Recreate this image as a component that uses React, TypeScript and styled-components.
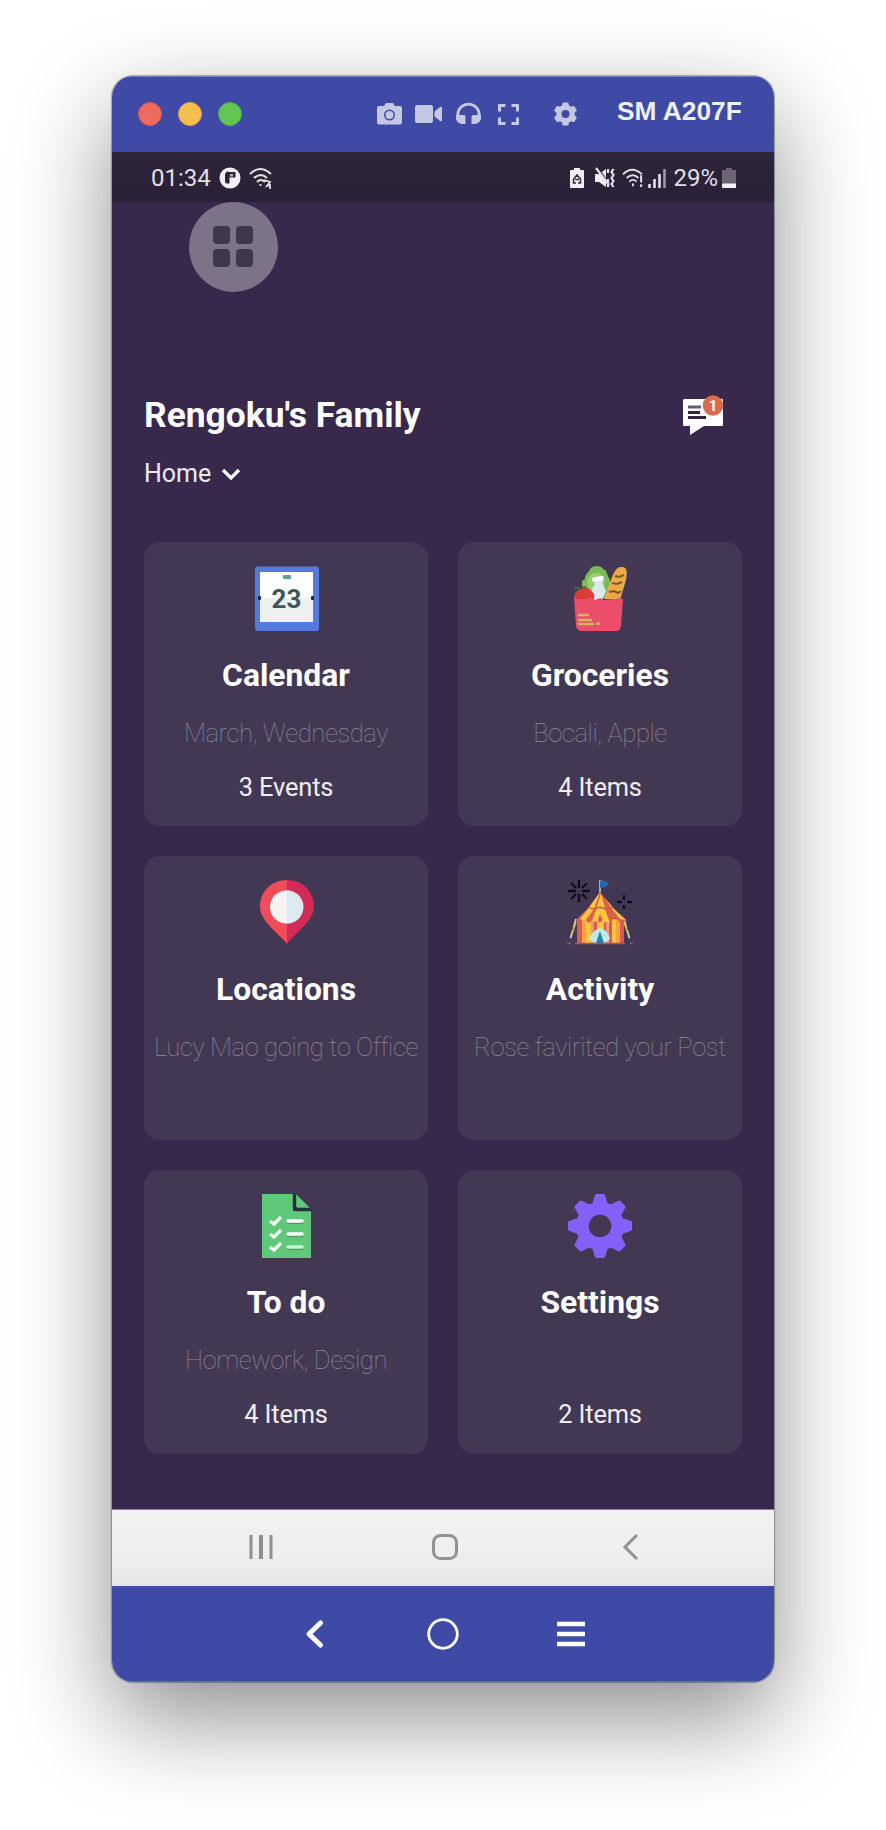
import React from 'react';
import styled, { createGlobalStyle } from 'styled-components';

const Global = createGlobalStyle`
  * { box-sizing: border-box; }
  body { margin: 0; background: #fff; overflow: hidden; }
  svg { display: block; flex: none; overflow: visible; }
`;

const Desktop = styled.main`
  width: 886px;
  height: 1830px;
  padding: 76px 0 0 112px;
  overflow: hidden;
  background: #fff;
  font-family: Roboto, "Liberation Sans", sans-serif;
`;

const Window = styled.section`
  width: 662px;
  height: 1606px;
  border-radius: 21px;
  overflow: hidden;
  display: flex;
  flex-direction: column;
  box-shadow: 0 0 1px 1px rgba(0, 0, 0, 0.3), 0 36px 96px rgba(0, 0, 0, 0.45);
`;

const TitleBar = styled.header`
  height: 76px;
  background: #3e4aa5;
  border-top: 1px solid #7580bd;
  display: flex;
  align-items: center;
  padding: 0 32px 1px 26px;
`;

const Lights = styled.div`
  display: flex;
  gap: 16px;
  margin-right: 135px;
`;

const Light = styled.span<{ $fill: string; $edge: string }>`
  width: 24px;
  height: 24px;
  border-radius: 50%;
  background: ${(p) => p.$fill};
  border: 1px solid ${(p) => p.$edge};
`;

const Tools = styled.div`
  display: flex;
  align-items: center;
  color: #c4c8e2;
`;

const Tool = styled.svg<{ $gap: number }>`
  margin-right: ${(p) => p.$gap}px;
  fill: currentColor;
`;

const DeviceName = styled.h1`
  margin: -6px 0 0;
  font: 700 26.3px/32px "Liberation Sans", Arial, sans-serif;
  color: #eeeff8;
  white-space: nowrap;
`;

const StatusBar = styled.div`
  height: 50px;
  background: linear-gradient(#2e253a, #2a2037);
  display: flex;
  align-items: center;
  padding: 1px 38px 0 39px;
  color: #e2dfe6;
`;

const StatusText = styled.span`
  font-size: 24px;
  line-height: 28px;
  white-space: nowrap;
`;

const StatusLeft = styled.div`
  display: flex;
  align-items: center;
  gap: 8px;
  flex: 1;
`;

const StatusRight = styled.div`
  display: flex;
  align-items: center;
`;

const Screen = styled.div`
  flex: 1;
  background: #38284c;
  padding: 0 32px;
  display: flex;
  flex-direction: column;
`;

const Floating = styled.button`
  margin: 0 0 0 45px;
  padding: 0 2px 1px 0;
  border: 0;
  width: 89px;
  height: 90px;
  border-radius: 50%;
  background: #7d7388;
  display: grid;
  grid-template-columns: 17px 17px;
  grid-template-rows: 18px 18px;
  gap: 5px 6px;
  place-content: center;
`;

const Dot = styled.i`
  background: #3f374c;
  border-radius: 4px;
`;

const Heading = styled.div`
  display: flex;
  justify-content: space-between;
  margin-top: 102px;
  height: 58px;
  padding-right: 18px;
`;

const Family = styled.h2`
  margin: 0;
  color: #fff;
  font-size: 35.4px;
  font-weight: 700;
  line-height: 43px;
  white-space: nowrap;
`;

const HomeRow = styled.div`
  display: flex;
  align-items: center;
  gap: 10px;
  height: 40px;
  padding-top: 4px;
  margin-bottom: 50px;
  color: #ece9ef;
  font-size: 25px;
  line-height: 38px;
`;

const Cards = styled.div`
  display: grid;
  grid-template-columns: 284px 284px;
  grid-auto-rows: 284px;
  gap: 30px;
`;

const Card = styled.article`
  background: #433853;
  border-radius: 16px;
  padding-top: 24px;
  display: flex;
  flex-direction: column;
  align-items: center;
  white-space: nowrap;

  &:nth-child(odd) > svg {
    margin-left: 2px;
  }

  /* The last row sits one pixel tighter under its icons. */
  &:nth-child(n + 5) > h3 {
    margin-top: 23px;
  }
`;

const CardTitle = styled.h3`
  margin: 24px 0 0;
  height: 40px;
  line-height: 39px;
  font-size: 31.8px;
  font-weight: 700;
  color: #fff;
`;

const CardNote = styled.p`
  margin: 19px 0 0;
  height: 36px;
  line-height: 36px;
  font-size: 25.6px;
  letter-spacing: -0.4px;
  font-weight: 100;
  color: #8e8793;
`;

const CardCount = styled.p`
  margin: 18px 0 0;
  height: 36px;
  line-height: 37px;
  font-size: 25.4px;
  letter-spacing: -0.15px;
  color: #f0eef2;
`;

const NavBar = styled.nav`
  height: 77px;
  border-top: 1px solid #8b7d9c;
  background: linear-gradient(#f4effa 0, #f0f2ef 3px, #ecefeb 50px, #e3e6e2 100%);
  display: flex;
  align-items: center;
  padding: 0 136px 2px 137px;
`;

const Controls = styled.footer`
  height: 96px;
  background: #3e4aa5;
  border-bottom: 1px solid #606bb5;
  display: flex;
  align-items: center;
  padding: 0 189px 0 193px;
`;

const Spaced = styled.svg<{ $before: number }>`
  margin-left: ${(p) => p.$before}px;
`;

const teeth = (n: number, r1: number, r2: number, a: number, b: number) => {
  const out: string[] = [];
  for (let i = 0; i < n; i++) {
    const c = (i / n) * Math.PI * 2 - Math.PI / 2;
    [[r1, -b], [r2, -a], [r2, a], [r1, b]].forEach(([r, o]) => {
      out.push(`${(Math.cos(c + o) * r).toFixed(2)},${(Math.sin(c + o) * r).toFixed(2)}`);
    });
  }
  return out.join(' ');
};

const CalendarIcon = () => (
  <svg width="66" height="66" viewBox="0 0 66 66">
    <rect x="1" y="0.500" width="64" height="64.500" rx="3" fill="#5479df" />
    <path d="M6 6h53v26H6z" fill="#fff" />
    <path d="M6 32h53v24H6z" fill="#eff1f1" />
    <rect x="29" y="9" width="8" height="4" rx="1" fill="#55a69a" />
    <rect x="4" y="30" width="3" height="4" rx="1" fill="#1d2938" />
    <rect x="57" y="30" width="3" height="4" rx="1" fill="#1d2938" />
    <text x="32.500" y="42" textAnchor="middle" fontFamily="Roboto" fontSize="26" fontWeight="700" fill="#40555c">23</text>
  </svg>
);

const GroceriesIcon = () => (
  <svg width="66" height="66" viewBox="0 0 66 66">
    <path d="M15 32V15l3-2c0-6 4-6 5-10 3-4 11-4 13 0 4 1 4 6 6 9 3 5 1 12 0 20z" fill="#79bb55" />
    <path d="M20 17c0-7 6-11 12-10 5 2 7 7 5 13L25 31z" fill="#9acc70" />
    <path d="M37 33l7-19c2-6 5-14 11-13 6 0 5 7 4 13L53 34z" fill="#eca948" />
    <path d="M48 10l4 1 5-2M45 17l5 1 5-2M42 26l5-1 4 2 3-2" stroke="#80572d" strokeWidth="2" fill="none" />
    <path d="M25 14q-1-3 3-3l8-1q2 3-1 6l4 9-4 9h-9l-1-11 3-5z" fill="#dce7ee" />
    <path d="M25 15q0-4 4-4l7-1q2 5-4 5z" fill="#fff" />
    <path d="M7 32q0-8 8-9l3-2 4 2q8 5 4 12z" fill="#dc3b36" />
    <path d="M7 20l7 2 2-2 4 1-6 3-6-1z" fill="#48663b" />
    <path d="M7 31l4 2h9l3-2 5 3 5-2 4 2h10l4-2 5 1-2 27q-1 5-5 5H15q-5 0-6-5z" fill="#eb4d6b" />
    <path d="M12 49h9M12 54h12M12 58h14" stroke="#d7b45e" strokeWidth="2.500" strokeLinecap="round" />
    <rect x="29" y="56" width="4" height="3" rx="1" fill="#d7b45e" />
  </svg>
);

const LocationIcon = () => (
  <svg width="66" height="66" viewBox="0 0 66 66">
    <path d="M33 0v64C27 55 6 42 6 27 6 11 18 0 33 0z" fill="#f04d5b" />
    <path d="M33 0v64c7-10 27-23 27-37C60 11 48 0 33 0z" fill="#d42a58" />
    <circle cx="32.500" cy="27" r="16.500" fill="#f7f3f3" />
    <path d="M33 10.500a16.500 16.500 0 010 33z" fill="#dcebef" />
  </svg>
);

const ActivityIcon = () => (
  <svg width="66" height="66" viewBox="0 0 66 66">
    <path d="M12 0v8m0 6v8M1 11h8m6 0h8M4 3l5 5m6 6l5 5M20 3l-5 5m-6 6l-5 5M57 15v5m0 5v4M50 22h5m5 0h5" stroke="#110c19" strokeWidth="2.300" fill="none" />
    <path d="M33 14V0" stroke="#c8cbd5" strokeWidth="1.500" />
    <path d="M33 1q5-2 9 3-4 4-9 4z" fill="#216cac" />
    <path d="M9 39L3 60m54-21l6 21" stroke="#e2dfd9" strokeWidth="1.600" strokeDasharray="9 2" />
    <path d="M57 42l4 12M9 42L5 54" stroke="#d7b343" strokeWidth="1.600" />
    <path d="M10 39h47v25H10z" fill="#d85d50" />
    <path d="M15 39h9v24h-9zm15 0h7v24h-7zm15 0h8v24h-8z" fill="#f9c43d" />
    <path d="M15 39h4v24h-4zm34 0h4v24h-4z" fill="#f7a33a" />
    <path d="M24 39h3v24h-3zm15 0h3v24h-3z" fill="#e99a7c" />
    <path d="M33 12l13 16 14 13-7 1-5-4-6 5-5-5-4 5-5-5-6 5-6-5-8 3 13-13z" fill="#de6048" />
    <path d="M33 12l-6 17-9 12-5-2 9-11zm1 1l4 16 5 14-6-1-4-8-3 8-5-1 5-14zm4 5l9 11 12 11-6-1-8-10z" fill="#fac840" />
    <path d="M21 27q6 4 12 0 7 4 13 0" stroke="#c9564c" strokeWidth="1.500" fill="none" />
    <path d="M33 48q9 3 10 11l-5 4H27l-5-4q3-8 11-11z" fill="#bdece8" />
    <path d="M33 51l4 12h-8z" fill="#2482a8" />
    <path d="M8 63.500h50M0 63.500h4m59 0h3" stroke="#aa5262" strokeWidth="1.500" />
  </svg>
);

const TodoIcon = () => (
  <svg width="66" height="66" viewBox="0 0 66 66">
    <path d="M8 0h31v17h18v47H8z" fill="#60c979" />
    <path d="M42 0l14 14H42z" fill="#60c979" />
    <path d="M40.500 0v12q0 3.500 3.500 3.500h13" stroke="#292f42" strokeWidth="3.400" fill="none" />
    <path d="M16 27l4 3 7-7M16 40l4 3 7-7M16 53l4 3 7-7" stroke="#f4fff6" strokeWidth="3.300" fill="none" />
    <path d="M34 28.500h14M34 41.500h14M34 54.500h14" stroke="#439d64" strokeWidth="3" strokeLinecap="round" />
    <path d="M34 27h14M34 40h14" stroke="#fff" strokeWidth="3.500" strokeLinecap="round" />
    <path d="M34 53h14" stroke="#c7f2d0" strokeWidth="3.500" strokeLinecap="round" />
  </svg>
);

const SettingsIcon = () => (
  <svg width="66" height="66" viewBox="-33 -32 66 66">
    <polygon points={teeth(8, 22.5, 30.5, 0.11, 0.27)} fill="#8560fa" stroke="#8560fa" strokeWidth="3.500" strokeLinejoin="round" />
    <circle r="11.300" fill="#433853" />
  </svg>
);

const WifiArcs = () => (
  <path d="M1 7q10-10 21 0M5 11q7-6 13 0M8 15q4-4 8 0" stroke="currentColor" strokeWidth="2" fill="none" />
);

const cards = [
  { title: 'Calendar', note: 'March, Wednesday', count: '3 Events', Icon: CalendarIcon },
  { title: 'Groceries', note: 'Bocali, Apple', count: '4 Items', Icon: GroceriesIcon },
  { title: 'Locations', note: 'Lucy Mao going to Office', count: '', Icon: LocationIcon },
  { title: 'Activity', note: 'Rose favirited your Post', count: '', Icon: ActivityIcon },
  { title: 'To do', note: 'Homework, Design', count: '4 Items', Icon: TodoIcon },
  { title: 'Settings', note: '', count: '2 Items', Icon: SettingsIcon },
];

export default function App() {
  return (
    <Desktop>
      <Global />
      <Window>
        <TitleBar>
          <Lights>
            <Light $fill="#ed6b60" $edge="#d9524b" />
            <Light $fill="#f5bf50" $edge="#dca541" />
            <Light $fill="#62c655" $edge="#4dab43" />
          </Lights>
          <Tools>
            <Tool $gap={13} width="25" height="22" viewBox="0 0 25 22">
              <path fillRule="evenodd" d="M2 3h5l2-3h7l2 3h5q2 0 2 2v14.500q0 2-2 2H2q-2 0-2-2V5q0-2 2-2zM12.500 6.500a5.500 5.500 0 100 11 5.500 5.500 0 000-11z" />
              <circle cx="12.500" cy="12" r="4" />
            </Tool>
            <Tool $gap={14} width="27" height="20" viewBox="0 0 27 20">
              <rect y="1" width="18" height="18" rx="2.500" />
              <path d="M19.500 7.500L25 3q2-1 2 1v12q0 2-2 1l-5.500-4.500z" />
            </Tool>
            <Tool $gap={17} width="25" height="22" viewBox="0 0 25 22">
              <path d="M1.700 17V12a10.800 10.800 0 0121.600 0v5" fill="none" stroke="currentColor" strokeWidth="2.800" />
              <path d="M0 12h8q1.500 0 1.500 1.500V21H6Q0 20 0 14zM25 12h-7.500q-2 0-2 1.500V21H19q6-1 6-7z" />
            </Tool>
            <Tool $gap={35} width="21" height="21" viewBox="0 0 21 21">
              <path d="M1.500 7.500v-6h6m6 0h6v6m0 6v6h-6m-6 0h-6v-6" fill="none" stroke="currentColor" strokeWidth="3" />
            </Tool>
            <Tool $gap={40} width="23" height="24" viewBox="-11.500 -12 23 24">
              <polygon points={teeth(6, 8.5, 11, 0.2, 0.34)} stroke="currentColor" strokeWidth="1.500" strokeLinejoin="round" />
              <circle r="4" fill="#3e4aa5" />
            </Tool>
          </Tools>
          <DeviceName>SM A207F</DeviceName>
        </TitleBar>

        <StatusBar>
          <StatusLeft>
            <StatusText>01:34</StatusText>
            <svg width="22" height="22" viewBox="0 0 22 22">
              <circle cx="11" cy="11" r="10.500" fill="#f3f1f5" />
              <path d="M8.500 4.500Q6 5 6 8v6q0 2 1.500 2.500h3V5z" fill="#2c2338" />
              <path d="M10 5h6.500v5.500H10z" fill="#2c2338" />
              <path d="M11 7v2.500h3V7z" fill="#b8b3bf" />
            </svg>
            <svg width="23" height="22" viewBox="0 0 23 22">
              <WifiArcs />
              <path d="M11.500 17v2M15 13l6 2-3 4 3-1v4" stroke="currentColor" strokeWidth="1.800" fill="none" />
            </svg>
          </StatusLeft>
          <StatusRight>
            <svg width="14" height="20" viewBox="0 0 14 20">
              <path d="M4 0h6v2h3q1 0 1 1v16q0 1-1 1H1q-1 0-1-1V3q0-1 1-1h3z" fill="#f2eff5" />
              <path d="M6 15H3.500v-4L7 7l3.500 4v4H8M5 11.500h4" fill="none" stroke="#332a3e" strokeWidth="1.500" />
            </svg>
            <svg width="20" height="20" viewBox="0 0 20 20" style={{ marginLeft: 11, marginRight: 6 }}>
              <path d="M0 6h4l7-5v18l-7-5H0z" fill="#f0edf3" />
              <path d="M3 0l12 17" stroke="#2c2338" strokeWidth="1.500" />
              <path d="M1 0l13 17M13 1v4m0 6v8M18.500 1l-2 3 2 3-2 3 2 3-2 3 2 3" fill="none" stroke="currentColor" strokeWidth="2.200" />
            </svg>
            <svg width="23" height="20" viewBox="0 0 23 22">
              <WifiArcs />
              <path d="M12 17v3M21 8v8m0 2v3" stroke="currentColor" strokeWidth="2.200" />
            </svg>
            <svg width="18" height="20" viewBox="0 0 18 20" style={{ marginLeft: 4, marginRight: 7 }}>
              <path d="M1.500 16v4M6.500 11v9M11.500 6v14" stroke="currentColor" strokeWidth="2.600" />
              <path d="M16.500 1v19" stroke="#9e97a6" strokeWidth="2.600" />
            </svg>
            <StatusText>29%</StatusText>
            <svg width="14" height="20" viewBox="0 0 14 20" style={{ marginLeft: 4 }}>
              <path d="M4 0h6v2h4v18H0V2h4z" fill="#6c6377" />
              <rect y="15.500" width="14" height="4.500" rx="1" fill="#f3f1f5" />
            </svg>
          </StatusRight>
        </StatusBar>

        <Screen>
          <Floating aria-label="Shortcuts"><Dot /><Dot /><Dot /><Dot /></Floating>
          <Heading>
            <Family>Rengoku's Family</Family>
            <svg width="42" height="42" viewBox="0 0 42 42">
              <path d="M3 5h37q1 0 1 1v25q0 1-1 1H22L8 41V32H2q-1 0-1-1V6q0-1 2-1z" fill="#fff" />
              <path d="M6 13h13" stroke="#645782" strokeWidth="3" />
              <path d="M6 18.500h12M6 23.500h18" stroke="#32243f" strokeWidth="3" />
              <circle cx="31" cy="11.500" r="10.300" fill="#d66b4e" />
              <text x="31" y="17" textAnchor="middle" fontFamily="Roboto" fontWeight="700" fontSize="15" fill="#fff">1</text>
            </svg>
          </Heading>
          <HomeRow>
            <span>Home</span>
            <svg width="20" height="14" viewBox="0 0 20 14"><path d="M2 3l8 8 8-8" stroke="#fff" strokeWidth="3.300" fill="none" /></svg>
          </HomeRow>
          <Cards>
            {cards.map(({ title, note, count, Icon }) => (
              <Card key={title}>
                <Icon />
                <CardTitle>{title}</CardTitle>
                <CardNote>{note}</CardNote>
                <CardCount>{count}</CardCount>
              </Card>
            ))}
          </Cards>
        </Screen>

        <NavBar>
          <svg width="24" height="24" viewBox="0 0 24 24">
            <path d="M2 0v24M22 0v24" stroke="#8d908c" strokeWidth="3" />
            <path d="M12 0v24" stroke="#8d908c" strokeWidth="4" />
          </svg>
          <Spaced $before={159} width="26" height="26" viewBox="0 0 26 26">
            <rect x="1.500" y="1.500" width="23" height="23" rx="7" stroke="#8f928e" strokeWidth="3" fill="none" />
          </Spaced>
          <Spaced $before={165} width="15" height="26" viewBox="0 0 15 26">
            <path d="M14 1L2 13l12 12" stroke="#8f928e" strokeWidth="3" fill="none" />
          </Spaced>
        </NavBar>

        <Controls>
          <svg width="18" height="28" viewBox="0 0 18 28"><path d="M15.500 3L4 14l11.500 11" stroke="#fff" strokeWidth="5" strokeLinecap="round" strokeLinejoin="round" fill="none" /></svg>
          <Spaced $before={104} width="32" height="32" viewBox="0 0 32 32">
            <circle cx="16" cy="16" r="14.300" stroke="#fff" strokeWidth="2.800" fill="none" />
          </Spaced>
          <Spaced $before={98} width="28" height="26" viewBox="0 0 28 26">
            <path d="M0 3h28M0 13h28M0 23h28" stroke="#fff" strokeWidth="4.600" />
          </Spaced>
        </Controls>
      </Window>
    </Desktop>
  );
}
